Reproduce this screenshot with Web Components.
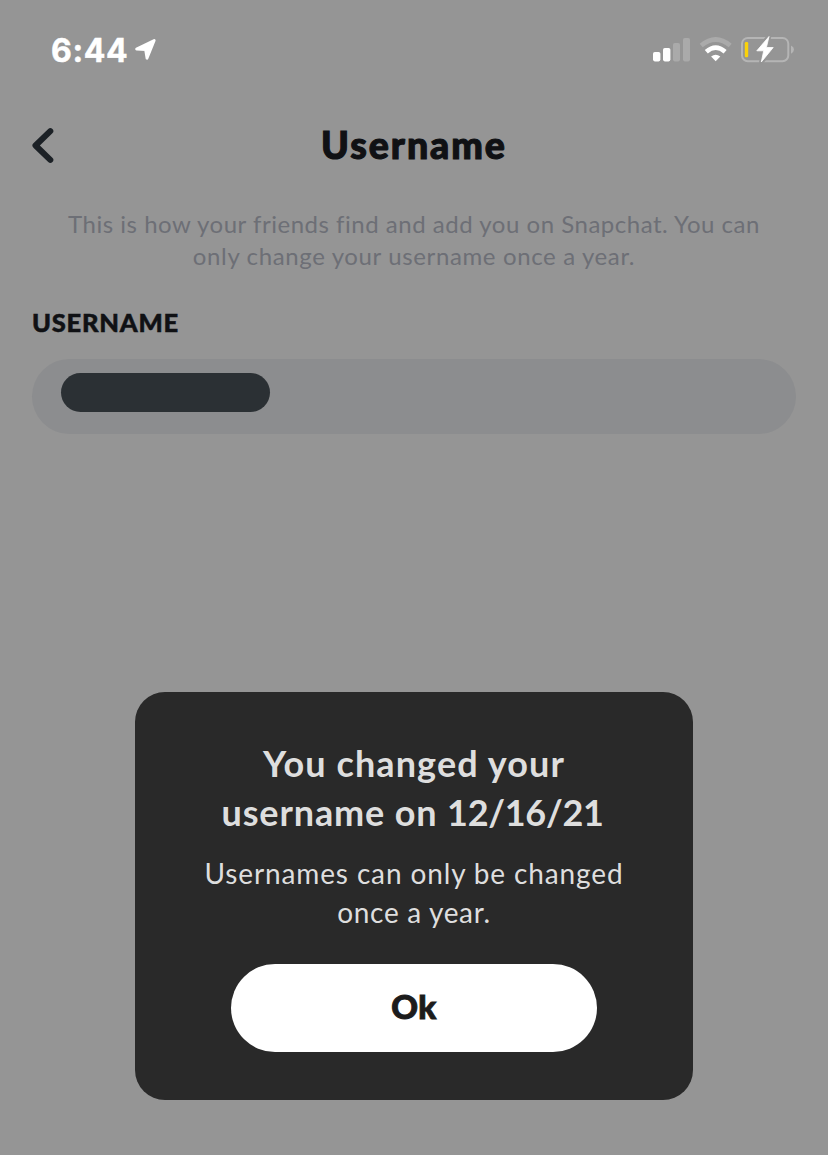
<!DOCTYPE html>
<html lang="en">
<head>
<meta charset="utf-8">
<meta name="viewport" content="width=device-width">
<title>Username</title>
<style>
html, body { margin: 0; height: 100%; }
body { background: #959595; font-family: Lato, "Open Sans", sans-serif; overflow: hidden; }
</style>
</head>
<body>
<username-screen></username-screen>
<script>
function define(name, markup) {
  const template = document.createElement('template');
  template.innerHTML = markup;
  customElements.define(name, class extends HTMLElement {
    constructor() {
      super();
      this.attachShadow({ mode: 'open' }).append(template.content.cloneNode(true));
    }
  });
}

define('status-bar', `
<style>
:host { display: flex; justify-content: space-between; height: 100px; padding: 0 32px 0 51px; color: #fff; }
.left { display: flex; }
.time { font: 700 32px/40px Inter, sans-serif; letter-spacing: 0.6px; -webkit-text-stroke: 0.5px #fff; margin-top: 31px; width: 78px; white-space: nowrap; }
svg { display: block; }
.arrow { margin: 37px 0 0 5px; }
.right { margin-top: 30px; }
</style>
<div class="left"><span class="time">6:44</span>
<svg class="arrow" width="24" height="26" viewBox="0 0 24 26"><path d="M2.6 12 20.2 3.4 13 21.2 11.6 12.7Z" fill="#fff" stroke="#fff" stroke-width="2.8" stroke-linejoin="round"/></svg></div>
<svg class="right" width="144" height="40" viewBox="652 30 144 40">
  <g fill="#fff"><rect x="653" y="52" width="7.4" height="9.4" rx="1.8"/><rect x="663" y="48" width="7.4" height="13.4" rx="1.8"/></g>
  <g fill="#aaa"><rect x="673" y="43" width="7" height="18.4" rx="1.8"/><rect x="683" y="38" width="7" height="23.4" rx="1.8"/></g>
  <g fill="none" stroke-width="4.6">
    <path d="M701.2 45.6Q715.7 33.4 730.2 45.6" stroke="#aaa"/>
    <path d="M706.3 51.7Q715.7 43.4 725.1 51.7" stroke="#fff"/>
  </g>
  <path d="M711.1 56.6Q715.7 53.1 720.3 56.6L715.7 61.2Z" fill="#fff"/>
  <rect x="742" y="37.9" width="46.3" height="23.3" rx="5.8" fill="none" stroke="#b5b5b5" stroke-width="2"/>
  <path d="M791 45.4Q794 46.8 794 49.5T791 53.7Z" fill="#b5b5b5"/>
  <rect x="744.8" y="42" width="3.4" height="15.2" rx="1.2" fill="#fad20a"/>
  <path d="M769 36.5 756.8 50.8H763.7L761.3 62 773.2 47.5H766.4Z" fill="#fff" stroke="#959595" stroke-width="4.5" stroke-linejoin="round"/>
  <path d="M769 36.5 756.8 50.8H763.7L761.3 62 773.2 47.5H766.4Z" fill="#fff" stroke="#fff" stroke-width="0.8" stroke-linejoin="round"/>
</svg>`);

define('nav-header', `
<style>
:host { display: grid; grid-template-columns: 60px 1fr 60px; height: 92px; padding: 0 16px; align-items: center; }
svg { display: block; margin-left: 12px; }
h1 { margin: 0; padding-bottom: 2px; text-align: center; font-size: 37.5px; line-height: 48px; font-weight: 900; color: #101114; letter-spacing: 1.95px; -webkit-text-stroke: 1.1px #101114; }
</style>
<svg width="32" height="40" viewBox="0 0 32 40"><path d="M22.3 5.2 7.5 19.5 22.3 33.8" fill="none" stroke="#1c2126" stroke-width="6" stroke-linecap="round" stroke-linejoin="round"/></svg>
<h1><slot></slot></h1>`);

define('text-line', `
<style>:host { display: block; white-space: nowrap; }</style><slot></slot>`);

define('username-field', `
<style>
:host { display: block; margin: 0 32px; }
label { display: block; font-size: 25.5px; line-height: 32px; font-weight: 900; color: #101114; letter-spacing: 0.75px; -webkit-text-stroke: 0.5px #101114; }
.box { height: 75px; margin: 21px 0 0; border-radius: 38px; background: #8c8d8f; display: flex; }
.cover { width: 208.6px; height: 39px; border-radius: 20px; margin: 14px 0 0 29.4px; background: #2b3034; }
</style>
<label><slot></slot></label>
<div class="box"><div class="cover"></div></div>`);

define('pill-button', `
<style>
:host { display: block; }
button { display: block; width: 366px; height: 88px; margin: 0; padding: 0 0 5px; border: 0; border-radius: 44px; background: #fff; color: #1c1c1c; font: 900 33px/40px Lato, sans-serif; -webkit-text-stroke: 1px #1c1c1c; letter-spacing: 0.6px; }
</style>
<button><slot></slot></button>`);

define('alert-dialog', `
<style>
:host { display: flex; flex-direction: column; align-items: center; box-sizing: border-box; width: 558px; height: 408px; padding-top: 47px; border-radius: 30px; background: #292929; color: #dedede; text-align: center; }
h2 { margin: 0; font-size: 36px; line-height: 49px; font-weight: 700; }
.body { margin: 17px 0 32px; font-size: 28px; line-height: 39px; }
</style>
<h2><slot name="title"></slot></h2>
<div class="body"><slot name="body"></slot></div>
<slot></slot>`);

define('username-screen', `
<style>
:host { display: block; position: relative; height: 1155px; background: #959595; }
.intro { height: 114px; padding-top: 16px; box-sizing: border-box; text-align: center; font-size: 24px; line-height: 32px; color: #6d6f76; }
.overlay { position: absolute; inset: 0; display: flex; justify-content: center; align-items: flex-end; padding-bottom: 55px; }
.i1 { letter-spacing: 0.52px; } .i2 { letter-spacing: 0.63px; }
.t1 { letter-spacing: 1.1px; } .t2 { letter-spacing: 0.87px; margin-right: 3px; }
.date { letter-spacing: -0.3px; }
.b1 { letter-spacing: 0.87px; } .b2 { letter-spacing: 0.67px; }
</style>
<status-bar></status-bar>
<nav-header>Username</nav-header>
<div class="intro">
  <text-line class="i1">This is how your friends find and add you on Snapchat. You can</text-line>
  <text-line class="i2">only change your username once a year.</text-line>
</div>
<username-field>USERNAME</username-field>
<div class="overlay">
  <alert-dialog>
    <text-line class="t1" slot="title">You changed your</text-line>
    <text-line class="t2" slot="title">username on <span class="date">12/16/21</span></text-line>
    <text-line class="b1" slot="body">Usernames can only be changed</text-line>
    <text-line class="b2" slot="body">once a year.</text-line>
    <pill-button>Ok</pill-button>
  </alert-dialog>
</div>`);
</script>
</body>
</html>
